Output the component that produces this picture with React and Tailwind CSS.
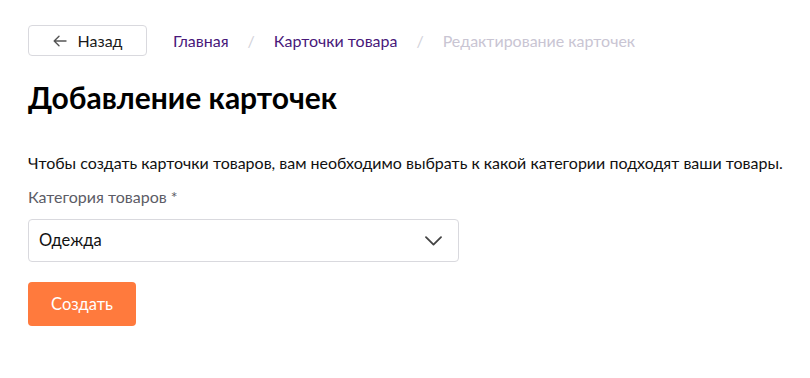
import { useState } from 'react';

const crumbs = [
    { label: 'Главная', active: true },
    { label: 'Карточки товара', active: true },
    { label: 'Редактирование карточек', active: false },
];

export default function App() {
    const [category] = useState('Одежда');

    return (
        <div className="min-h-[378px] bg-white px-7 pt-[25px] text-[#1a1a1a]" style={{ fontFamily: 'Lato, "Noto Sans", sans-serif' }}>
            {/* Top bar: back button + breadcrumbs */}
            <div className="flex items-center">
                <button className="flex h-[31px] w-[119px] items-center justify-center gap-[11px] rounded-[4px] border border-[#d9d9de] text-[16px] text-[#1a1a1a]">
                    <svg width="14" height="12" viewBox="0 0 14 12" fill="none" stroke="#555" strokeWidth="1.4" strokeLinecap="round" strokeLinejoin="round">
                        <path d="M13 6H1.5M6 1.2L1.2 6L6 10.8" />
                    </svg>
                    <span>Назад</span>
                </button>
                <nav className="ml-[26px] flex items-center text-[16px]">
                    {crumbs.map((c, i) => (
                        <div key={c.label} className="flex items-center">
                            {i > 0 && <span className="mx-[19px] text-[#d2d2da]">/</span>}
                            <span className={c.active ? 'text-[#48187a]' : 'text-[#c9c5d3]'}>{c.label}</span>
                        </div>
                    ))}
                </nav>
            </div>

            <h1 className="mt-[23px] text-[30px] font-bold leading-[36px] text-black">Добавление карточек</h1>

            <p className="mt-[38px] whitespace-nowrap text-[16px] leading-5 text-[#111]">
                Чтобы создать карточки товаров, вам необходимо выбрать к какой категории подходят ваши товары.
            </p>

            <label className="mt-[14px] block text-[16px] leading-5 text-[#5c5c66]">Категория товаров *</label>

            <div className="mt-[12px] flex h-[43px] w-[431px] items-center justify-between rounded-[4px] border border-[#d9d9de] pl-[10px] pr-[16px]">
                <span className="text-[16.5px] text-[#111]">{category}</span>
                <svg width="17" height="10" viewBox="0 0 17 10" fill="none" stroke="#444" strokeWidth="1.8" strokeLinecap="round" strokeLinejoin="round">
                    <path d="M1 1.2L8.5 8.6L16 1.2" />
                </svg>
            </div>

            <button className="mt-[20px] h-[44px] w-[108px] rounded-[4px] bg-[#ff7a3d] text-[16.5px] text-white">Создать</button>
        </div>
    );
}
